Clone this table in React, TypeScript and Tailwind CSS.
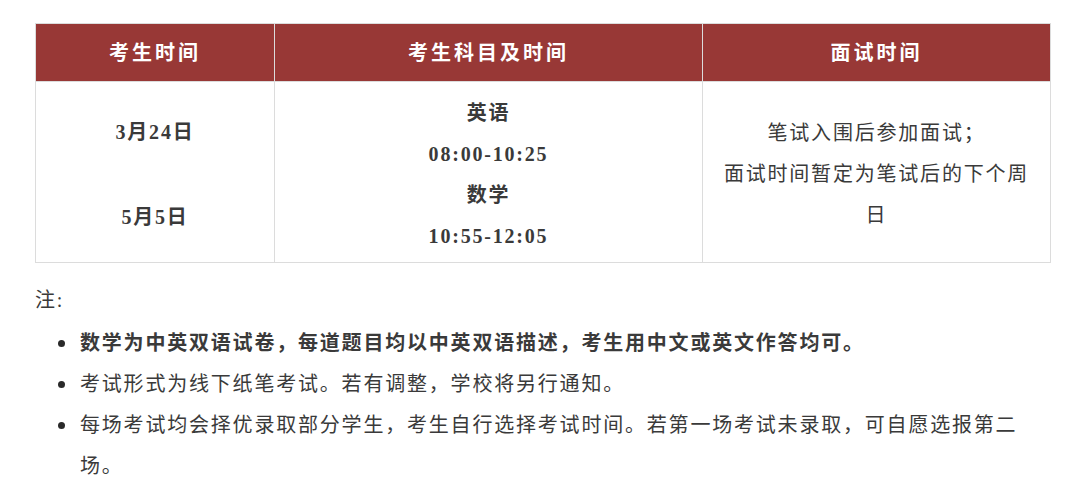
const FONT = "font-['Liberation_Serif','Noto_Sans_CJK_SC',serif]";

const NOTES = [
  {
    text: "数学为中英双语试卷，每道题目均以中英双语描述，考生用中文或英文作答均可。",
    bold: true,
  },
  { text: "考试形式为线下纸笔考试。若有调整，学校将另行通知。", bold: false },
  {
    text: "每场考试均会择优录取部分学生，考生自行选择考试时间。若第一场考试未录取，可自愿选报第二场。",
    bold: false,
  },
];

function HeadCell({ children }: { children: React.ReactNode }) {
  return (
    <div className="flex h-[58px] items-center justify-center border-r border-b border-[#dcdcdc] bg-[#983836] text-[20px] font-bold tracking-[3px] text-white">
      {children}
    </div>
  );
}

export default function App() {
  return (
    <div className={`min-h-[485px] w-[1080px] bg-white pt-[23px] text-[#3a3a3a] ${FONT}`}>
      <div className="ml-[35px] grid w-[1016px] grid-cols-[239px_428px_348px] border-t border-l border-[#dcdcdc]">
        <HeadCell>考生时间</HeadCell>
        <HeadCell>考生科目及时间</HeadCell>
        <HeadCell>面试时间</HeadCell>

        <div className="flex h-[181px] flex-col items-center justify-center gap-[44px] border-r border-b border-[#dcdcdc] pt-[5px] text-[20px] leading-[41px] font-semibold tracking-[1.8px]">
          <p>3月24日</p>
          <p>5月5日</p>
        </div>
        <div className="flex h-[181px] flex-col items-center justify-center border-r border-b border-[#dcdcdc] pt-[5px] text-[20px] leading-[41px] font-semibold tracking-[1.8px]">
          <p>英语</p>
          <p className="font-bold">08:00-10:25</p>
          <p>数学</p>
          <p className="font-bold">10:55-12:05</p>
        </div>
        <div className="flex h-[181px] flex-col items-center justify-center border-r border-b border-[#dcdcdc] px-4 pt-[5px] text-center text-[20px] leading-[41px] tracking-[1.8px]">
          <p>笔试入围后参加面试；</p>
          <p>面试时间暂定为笔试后的下个周日</p>
        </div>
      </div>

      <div className="mt-[17px] ml-[35px] w-[995px] text-[20px] leading-[41px] tracking-[1.8px]">
        <p>注:</p>
        <ul className="mt-[2px]">
          {NOTES.map((n) => (
            <li key={n.text} className="flex">
              <span className="flex h-[41px] w-[45px] shrink-0 items-center pl-[23px]">
                <span className="h-[7px] w-[7px] rounded-full bg-[#2a2a2a]" />
              </span>
              <span className={n.bold ? "flex-1 font-semibold" : "flex-1"}>{n.text}</span>
            </li>
          ))}
        </ul>
      </div>
    </div>
  );
}
